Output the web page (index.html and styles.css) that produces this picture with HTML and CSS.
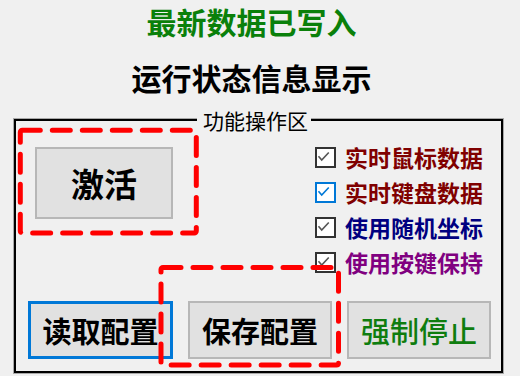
FILE: index.html
```html
<!DOCTYPE html>
<html lang="zh-CN">
<head>
<meta charset="utf-8">
<title>运行状态</title>
<link rel="stylesheet" href="styles.css">
</head>
<body>
<div class="page">
  <div class="status">最新数据已写入</div>
  <div class="heading">运行状态信息显示</div>
  <div class="group">
    <span class="legend">功能操作区</span>
    <div class="top">
      <button class="btn btn-activate">激活</button>
      <ul class="checks">
        <li class="check c-red"><span class="box"><svg viewBox="0 0 21 21"><polyline points="4.3,11.5 8.3,16 17,6.8"/></svg></span><span class="label">实时鼠标数据</span></li>
        <li class="check c-red hot"><span class="box"><svg viewBox="0 0 21 21"><polyline points="4.3,11.5 8.3,16 17,6.8"/></svg></span><span class="label">实时键盘数据</span></li>
        <li class="check c-blue"><span class="box"><svg viewBox="0 0 21 21"><polyline points="4.3,11.5 8.3,16 17,6.8"/></svg></span><span class="label">使用随机坐标</span></li>
        <li class="check c-purple"><span class="box"><svg viewBox="0 0 21 21"><polyline points="4.3,11.5 8.3,16 17,6.8"/></svg></span><span class="label">使用按键保持</span></li>
      </ul>
    </div>
    <div class="actions">
      <button class="btn btn-action btn-focus">读取配置</button>
      <button class="btn btn-action">保存配置</button>
      <button class="btn btn-action btn-green">强制停止</button>
    </div>
  </div>
  <svg class="marks" viewBox="0 0 520 376" width="520" height="376">
    <rect x="20.3" y="130.3" width="176" height="102.7" rx="2"/>
    <rect x="161" y="267.5" width="177.5" height="97.5" rx="2"/>
  </svg>
</div>
</body>
</html>
```

FILE: styles.css
```css
* { box-sizing: border-box; }

html, body {
  margin: 0;
  padding: 0;
}

body {
  background: #f0f0f0;
  font-family: "Noto Sans CJK SC", "Noto Sans", sans-serif;
  color: #000;
  width: 520px;
  height: 376px;
  overflow: hidden;
}

.page {
  position: relative;
  width: 520px;
  height: 376px;
}

.status,
.heading {
  text-align: center;
  padding-right: 17px;
  font-size: 30px;
  font-weight: 700;
  line-height: 43px;
  height: 43px;
  white-space: nowrap;
}

.status {
  color: #0a800a;
}

.heading {
  margin-top: 13px;
  color: #000;
}

.group {
  margin-top: 20px;
  margin-left: 14px;
  width: 489px;
  height: 254px;
  border: 2px solid #000;
  box-shadow: 0 0 0 1px #a8a8a8;
  display: flex;
  flex-direction: column;
  padding: 0 0 12px 12px;
}

.legend {
  align-self: flex-start;
  margin: -13px 0 -11px 169px;
  padding: 0 3px 0 6px;
  height: 24px;
  line-height: 24px;
  font-size: 21px;
  font-weight: 400;
  background: #f0f0f0;
  color: #000;
  white-space: nowrap;
}

.top {
  display: flex;
  align-items: flex-start;
  margin-top: 19px;
  height: 140px;
}

.btn {
  margin: 0;
  padding: 0;
  font-family: "Noto Sans CJK SC", "Noto Sans", sans-serif;
  background: #e1e1e1;
  border: 2px solid #b7b7b7;
  color: #000;
  white-space: nowrap;
}

.btn-activate {
  margin: 7px 0 0 7px;
  width: 138px;
  height: 72px;
  font-size: 33px;
  font-weight: 700;
  line-height: 1;
}

.checks {
  list-style: none;
  margin: 0 0 0 142px;
  padding: 0;
  display: flex;
  flex-direction: column;
}

.check {
  display: flex;
  align-items: center;
  height: 35px;
  gap: 9px;
}

.box {
  width: 21px;
  height: 21px;
  border: 2px solid #333;
  background: #fff;
  display: flex;
}

.box svg {
  width: 17px;
  height: 17px;
  overflow: visible;
  margin: 0;
  transform: translate(-2px, -2px);
}

.box polyline {
  fill: none;
  stroke: #555;
  stroke-width: 2;
}

.hot .box {
  border-color: #0078d7;
}

.hot .box polyline {
  stroke: #0078d7;
}

.label {
  font-size: 23px;
  font-weight: 700;
  line-height: 1;
  white-space: nowrap;
}

.c-red .label { color: #800000; }
.c-blue .label { color: #000080; }
.c-purple .label { color: #800080; }

.actions {
  display: flex;
  gap: 15px;
  margin-top: 21px;
}

.btn-action {
  width: 144px;
  height: 58px;
  font-size: 29px;
  font-weight: 700;
  line-height: 1;
}

.btn-focus {
  width: 145px;
  border: 3px solid #0078d7;
}

.btn-green {
  color: #0f7d0f;
  font-weight: 500;
}

.marks {
  position: absolute;
  left: 0;
  top: 0;
  pointer-events: none;
}

.marks rect {
  fill: none;
  stroke: #ff0000;
  stroke-width: 5;
  stroke-dasharray: 18 12;
  stroke-linecap: round;
  stroke-linejoin: round;
}
```
